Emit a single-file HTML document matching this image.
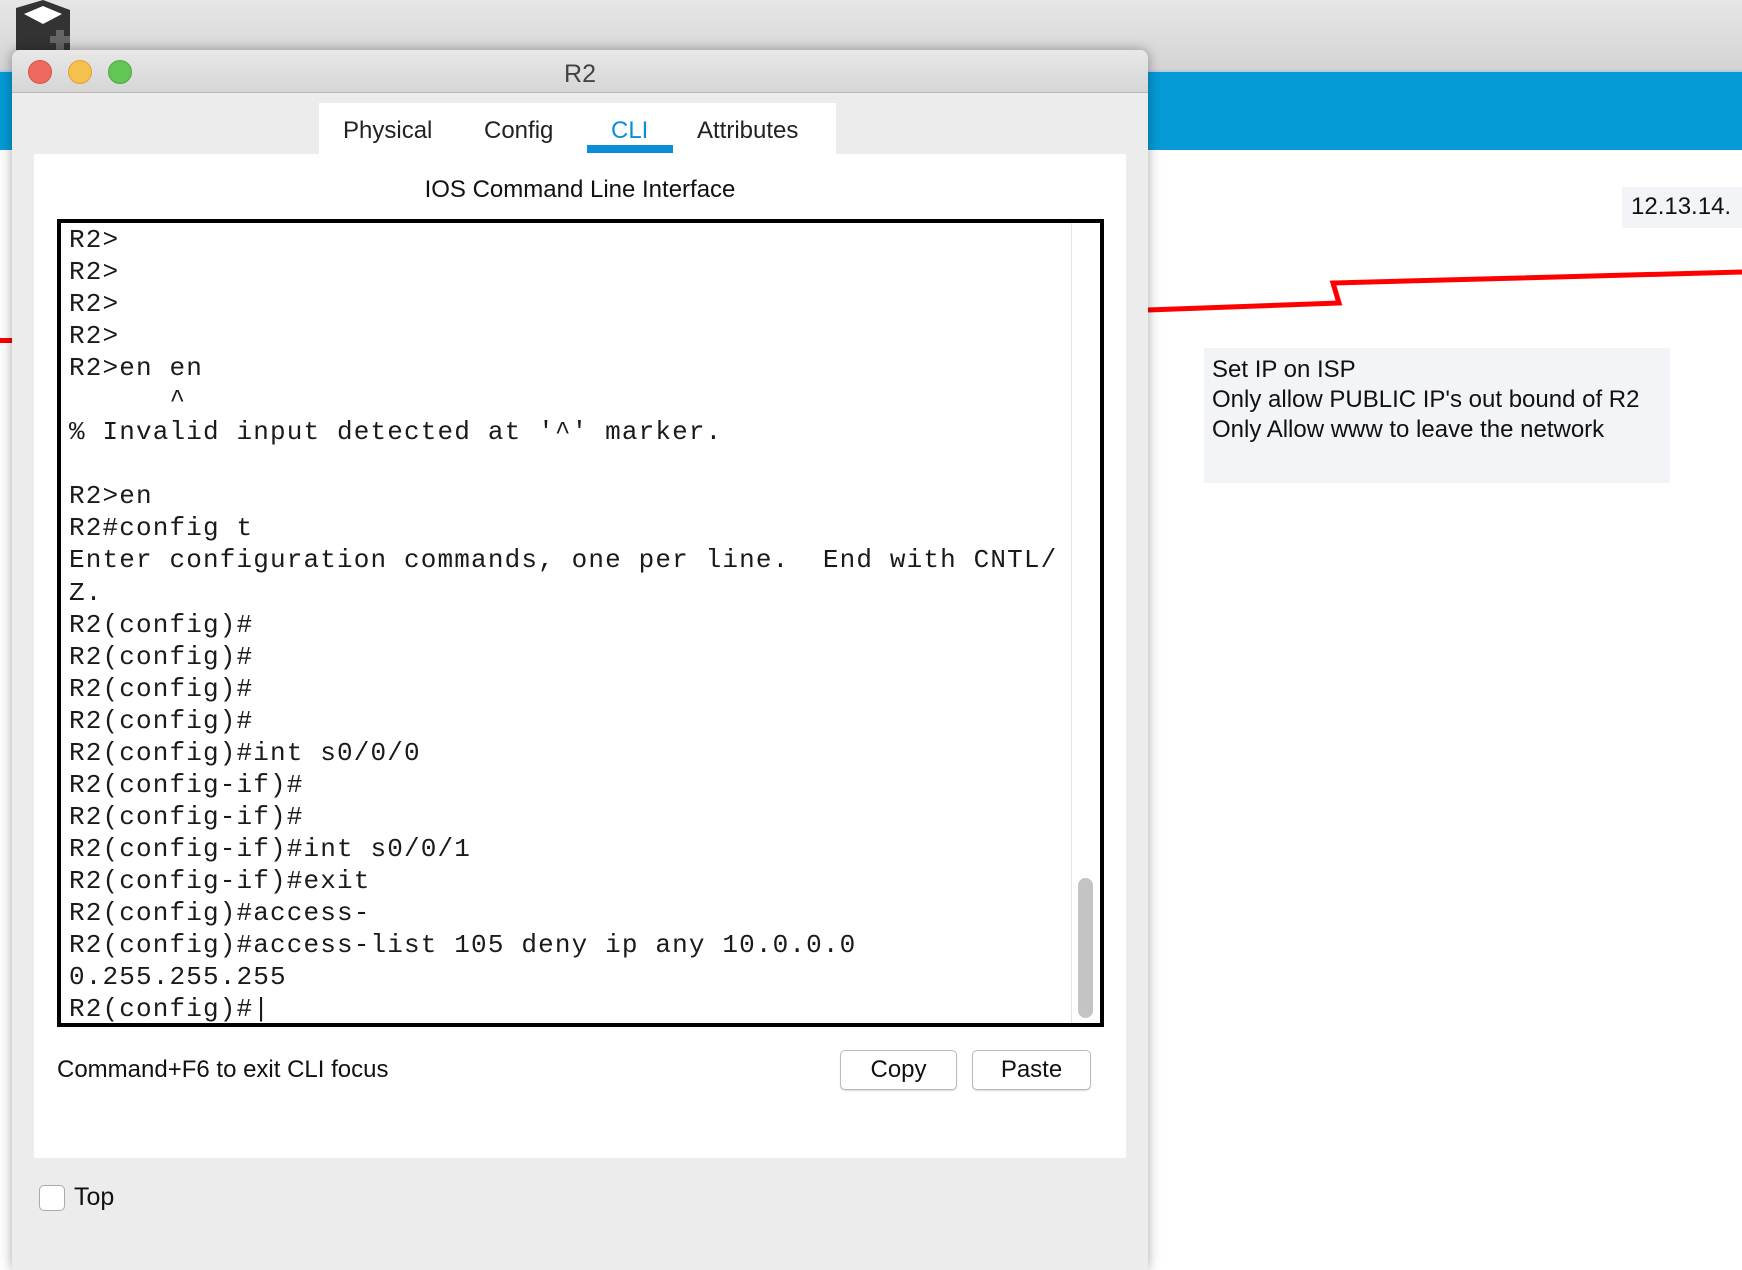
<!DOCTYPE html>
<html><head><meta charset="utf-8"><style>
*{margin:0;padding:0;box-sizing:border-box}
body{width:1742px;height:1250px;overflow:hidden;background:#fff;position:relative;font-family:"Liberation Sans","DejaVu Sans",sans-serif;color:#111}
.abs{position:absolute}
#topbg{left:0;top:0;width:1742px;height:70px;background:linear-gradient(#e6e6e6,#d4d4d4)}
#blue{left:0;top:70px;width:1742px;height:80px;background:#059bd6;border-top:2px solid #bcd}
#win{left:12px;top:50px;width:1136px;height:1220px;background:#ececec;border-radius:8px 8px 0 0;box-shadow:0 0 12px rgba(0,0,0,.35)}
#title{left:0;top:0;width:1136px;height:43px;background:linear-gradient(#e8e8e8,#d6d6d6);border-bottom:1px solid #b8b8b8;border-radius:8px 8px 0 0}
.tl{width:24px;height:24px;border-radius:50%;top:10px}
#panel{left:22px;top:104px;width:1092px;height:1004px;background:#fff}
#tabs{left:307px;top:53px;width:517px;height:51px;background:#fff}
.tab{position:absolute;top:14px;font-size:24px;color:#222}
#term{left:23px;top:65px;width:1047px;height:808px;border:4px solid #000;background:#fff}
pre{position:absolute;left:8px;top:1px;font-family:"Liberation Mono",monospace;font-size:26px;line-height:32.05px;letter-spacing:1.15px;color:#1a1a1a}
.btn{top:896px;height:40px;border:1px solid #bbb;border-radius:5px;background:#fff;font-size:24px;text-align:center;line-height:38px;box-shadow:0 1px 1px rgba(0,0,0,.15)}
</style></head><body>
<div id="topbg" class="abs"></div>
<div id="blue" class="abs"></div>
<svg class="abs" style="left:10px;top:0" width="66" height="50"><path d="M6 8 L33 0 L60 10 L60 50 L6 50 Z" fill="#333"/><path d="M14 14 L33 6 L52 14 L33 24 Z" fill="#fff"/><rect x="46" y="30" width="8" height="20" fill="#666"/><rect x="40" y="36" width="20" height="7" fill="#666"/></svg>
<svg class="abs" style="left:1140px;top:260px" width="602" height="60"><polyline points="8,50 199,43 193,23 602,12" fill="none" stroke="#f00" stroke-width="5"/></svg>
<svg class="abs" style="left:0;top:330px" width="14" height="20"><rect x="0" y="8" width="14" height="5" fill="#f00"/></svg>
<div class="abs" style="left:1622px;top:187px;width:120px;height:41px;background:#f3f4f8;font-size:24px;padding:6px 0 0 9px">12.13.14.</div>
<div class="abs" style="left:1204px;top:348px;width:466px;height:135px;background:#f3f4f8;font-size:24px;line-height:30px;padding:7px 0 0 8px">Set IP on ISP<br>Only allow PUBLIC IP's out bound of R2<br>Only Allow www to leave the network</div>
<div id="win" class="abs">
 <div id="title" class="abs">
  <div class="abs tl" style="left:16px;background:#ee6a5f;border:1px solid #d65247"></div>
  <div class="abs tl" style="left:56px;background:#f6c04f;border:1px solid #dea236"></div>
  <div class="abs tl" style="left:96px;background:#62c655;border:1px solid #4ba83d"></div>
  <div class="abs" style="left:0;width:1136px;top:10px;text-align:center;font-size:25px;color:#444">R2</div>
 </div>
 <div id="tabs" class="abs">
  <span class="tab" style="left:24px">Physical</span>
  <span class="tab" style="left:165px">Config</span>
  <span class="tab" style="left:292px;color:#0a8fd6">CLI</span>
  <span class="tab" style="left:378px">Attributes</span>
  <div class="abs" style="left:268px;top:42px;width:86px;height:8px;background:#0a8fd6"></div>
 </div>
 <div id="panel" class="abs">
  <div class="abs" style="left:0;width:1092px;top:22px;text-align:center;font-size:24px">IOS Command Line Interface</div>
  <div id="term" class="abs">
<pre>R2&gt;
R2&gt;
R2&gt;
R2&gt;
R2&gt;en en
      ^
% Invalid input detected at '^' marker.

R2&gt;en
R2#config t
Enter configuration commands, one per line.  End with CNTL/
Z.
R2(config)#
R2(config)#
R2(config)#
R2(config)#
R2(config)#int s0/0/0
R2(config-if)#
R2(config-if)#
R2(config-if)#int s0/0/1
R2(config-if)#exit
R2(config)#access-
R2(config)#access-list 105 deny ip any 10.0.0.0
0.255.255.255
R2(config)#|</pre>
   <div class="abs" style="left:1010px;top:0;width:1px;height:800px;background:#e4e4e4"></div>
   <div class="abs" style="left:1017px;top:655px;width:15px;height:140px;border-radius:8px;background:#c4c4c4"></div>
  </div>
  <div class="abs" style="left:23px;top:896px;font-size:24px;line-height:40px">Command+F6 to exit CLI focus</div>
  <div class="abs btn" style="left:806px;width:117px">Copy</div>
  <div class="abs btn" style="left:938px;width:119px">Paste</div>
 </div>
 <div class="abs" style="left:27px;top:1135px;width:26px;height:26px;border:1px solid #aaa;border-radius:5px;background:#fff"></div>
 <div class="abs" style="left:62px;top:1133px;font-size:25px">Top</div>
</div>
</body></html>
